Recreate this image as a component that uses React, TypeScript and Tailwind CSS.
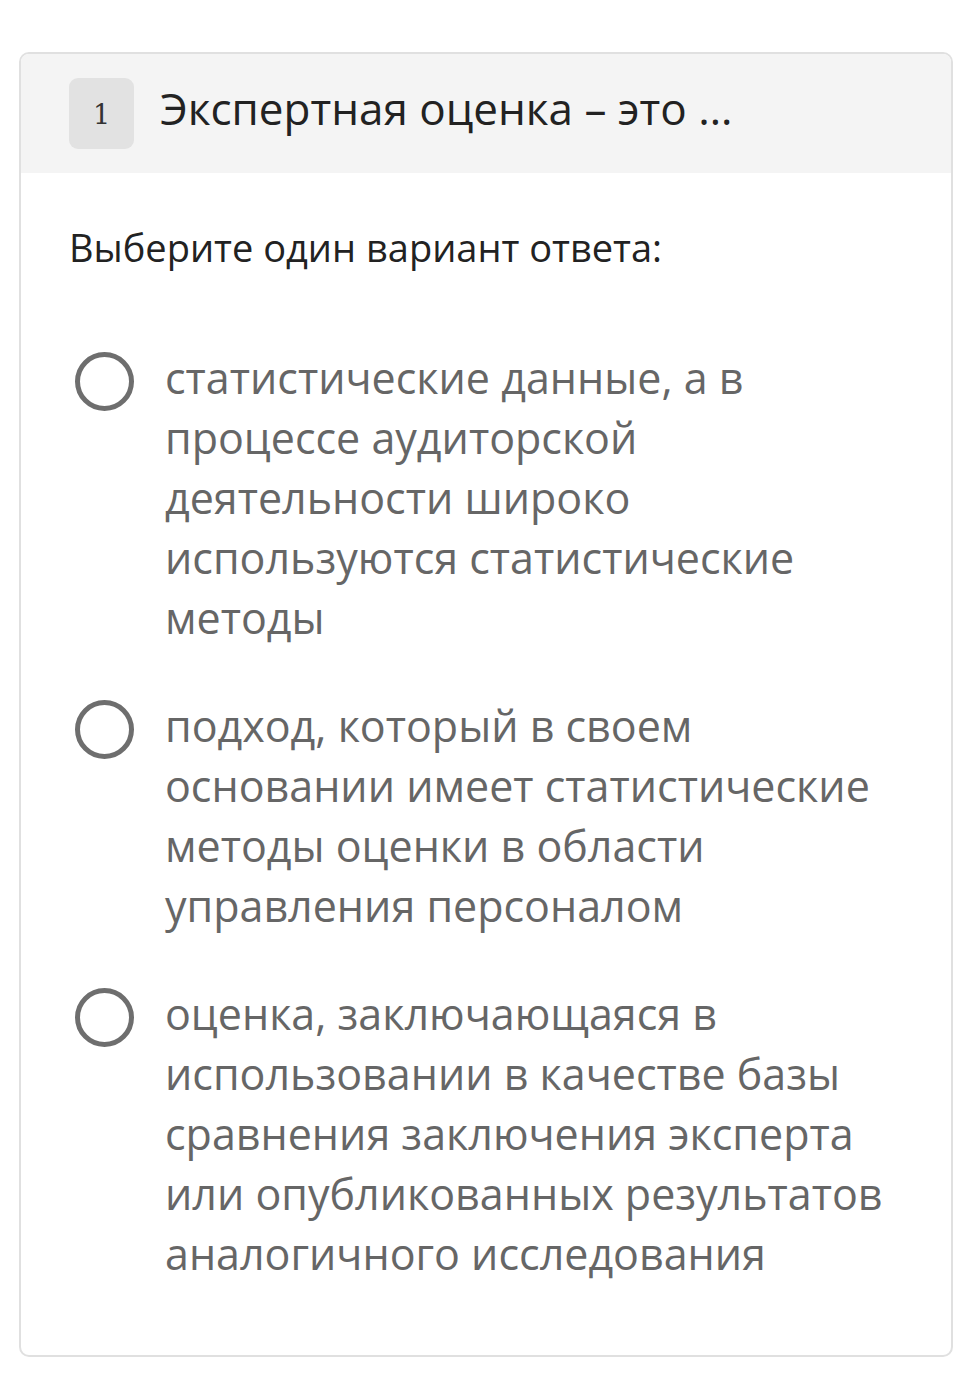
import React from "react";

const options: string[][] = [
  [
    "статистические данные, а в",
    "процессе аудиторской",
    "деятельности широко",
    "используются статистические",
    "методы",
  ],
  [
    "подход, который в своем",
    "основании имеет статистические",
    "методы оценки в области",
    "управления персоналом",
  ],
  [
    "оценка, заключающаяся в",
    "использовании в качестве базы",
    "сравнения заключения эксперта",
    "или опубликованных результатов",
    "аналогичного исследования",
  ],
];

export default function App() {
  return (
    <div
      className="min-h-[1384px] w-full bg-white pt-[52px] pl-[19px] pr-[6px]"
      style={{ fontFamily: '"Open Sans", "Noto Sans", sans-serif' }}
    >
      <div className="w-[934px] overflow-hidden rounded-[10px] border-2 border-[#e0e0e0] bg-white">
        <div className="flex h-[119px] items-center bg-[#f4f4f4] pl-[48px]">
          <div
            className="flex h-[71px] w-[65px] items-center justify-center rounded-[9px] bg-[#e2e2e2] pt-[4px] text-[27px] text-[#333]"
            style={{ fontFamily: '"DejaVu Serif", serif' }}
          >
            1
          </div>
          <div className="ml-[26px] pb-[12px] text-[44px] leading-none text-[#222]">
            Экспертная оценка – это …
          </div>
        </div>
        <div className="px-[48px] pt-[50px] pb-[71px]">
          <div className="text-[38px] leading-[48px] text-[#222]">
            Выберите один вариант ответа:
          </div>
          <div className="mt-[77px] flex flex-col gap-[48px]">
            {options.map((lines, i) => (
              <div key={i} className="flex items-start">
                <div className="ml-[6px] mt-[4px] h-[59px] w-[59px] shrink-0 rounded-full border-[5px] border-[#6e6e6e]" />
                <div className="ml-[31px] text-[43px] leading-[60px] text-[#666]">
                  {lines.map((l, j) => (
                    <div key={j} className="whitespace-nowrap">
                      {l}
                    </div>
                  ))}
                </div>
              </div>
            ))}
          </div>
        </div>
      </div>
    </div>
  );
}
